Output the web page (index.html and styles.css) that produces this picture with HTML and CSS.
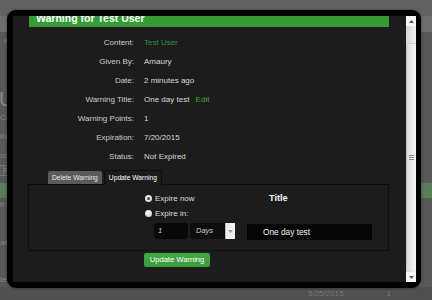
FILE: index.html
```html
<!DOCTYPE html>
<html>
<head>
<meta charset="utf-8">
<link rel="stylesheet" href="styles.css">
</head>
<body>
<div class="page">
  <div class="pg-top"></div>
  <div class="pg-band"></div>
  <div class="pg-line pg-name">Name</div>
  <div class="pg-gap g39"></div>
  <div class="pg-line pg-big">U</div>
  <div class="pg-line">Ce</div>
  <div class="pg-line">Ke</div>
  <div class="pg-line pg-short">sc</div>
  <div class="pg-box">P</div>
  <div class="pg-green"></div>
  <div class="pg-line pg-t14">tr</div>
  <div class="pg-gap g24"></div>
  <div class="pg-line pg-t14">ar</div>
  <div class="pg-gap g23"></div>
  <div class="pg-line pg-t14">te</div>
  <div class="pg-foot"><span class="pg-date">5/25/2015</span><span class="pg-num">1</span></div>
</div>

<div class="modal">
  <div class="viewport">
    <h1 class="head">Warning for Test User</h1>
    <dl class="details">
      <dt>Content:</dt><dd><span class="link-dark">Test User</span></dd>
      <dt>Given By:</dt><dd>Amaury</dd>
      <dt>Date:</dt><dd>2 minutes ago</dd>
      <dt>Warning Title:</dt><dd>One day test <span class="link">Edit</span></dd>
      <dt>Warning Points:</dt><dd>1</dd>
      <dt>Expiration:</dt><dd>7/20/2015</dd>
      <dt>Status:</dt><dd>Not Expired</dd>
    </dl>
    <div class="tabwrap">
      <div class="tabs">
        <span class="tab">Delete Warning</span>
        <span class="tab active">Update Warning</span>
      </div>
      <div class="panel">
        <div class="opt r1"><span class="radio checked"></span>Expire now</div>
        <div class="title-h">Title</div>
        <div class="opt r2"><span class="radio"></span>Expire in:</div>
        <div class="inputs">
          <span class="num">1</span>
          <span class="select"><span class="sel-val">Days</span><span class="sel-btn"><svg width="5" height="3" viewBox="0 0 5 3"><path d="M0 0h5L2.5 3z" fill="#9a9a9a"/></svg></span></span>
        </div>
        <div class="title-in">One day test</div>
      </div>
    </div>
    <div class="actions"><span class="btn">Update Warning</span></div>
  </div>
  <div class="scrollbar">
    <div class="sb-btn"><svg width="5" height="3" viewBox="0 0 5 3"><path d="M0 3h5L2.5 0z" fill="#555"/></svg></div>
    <div class="sb-track">
      <div class="sb-thumb"><span class="grip"></span></div>
    </div>
    <div class="sb-btn"><svg width="5" height="3" viewBox="0 0 5 3"><path d="M0 0h5L2.5 3z" fill="#555"/></svg></div>
  </div>
</div>
</body>
</html>
```

FILE: styles.css
```css
* { box-sizing: border-box; }
html, body { margin: 0; padding: 0; }
body {
  width: 432px;
  height: 300px;
  overflow: hidden;
  position: relative;
  background: #585858;
  font-family: "Liberation Sans", Arial, sans-serif;
}

/* background page (dimmed) */
.page { display: flex; flex-direction: column; }
.pg-top { height: 16px; background: #626262; }
.pg-band { height: 16px; background: #6e6e6e; }
.pg-line {
  height: 19px;
  line-height: 19px;
  font-size: 8px;
  color: #858585;
  white-space: nowrap;
  padding-left: 0;
}
.pg-name { padding-left: 4px; }
.pg-gap.g39 { height: 39px; }
.pg-gap.g24 { height: 24px; }
.pg-gap.g23 { height: 23px; }
.pg-big { font-size: 20px; height: 18px; line-height: 18px; color: #8c8c8c; margin-left: -1px; }
.pg-short { height: 17px; }
.pg-box {
  height: 11px;
  margin: 2px 0 7px -3px;
  width: 40px;
  border: 1px solid #777;
  background: #5f5f5f;
  font-size: 8px;
  line-height: 9px;
  padding-left: 5px;
  color: #8a8a8a;
}
.pg-green { height: 15px; background: #587d58; }
.pg-t14 { height: 14px; line-height: 14px; }
.pg-foot {
  height: 13px;
  display: flex;
  align-items: center;
  font-size: 8px;
  color: #7a7a7a;
  padding-left: 308px;
  background: #505050;
}
.pg-num { margin-left: 43px; }

/* modal */
.modal {
  position: absolute;
  left: 7px;
  top: 10px;
  width: 414px;
  height: 278px;
  background: #000;
  border-radius: 9px;
  padding: 6px 5px 6px 6px;
  display: flex;
  box-shadow: 0 0 3px rgba(0,0,0,0.5);
}
.viewport {
  flex: 1;
  overflow: hidden;
  background: #1c1c1c;
  color: #d4d4d4;
  font-size: 8px;
}
.head {
  margin: -11px 17px 0 16px;
  background: #379a37;
  color: #fff;
  font-size: 10.5px;
  font-weight: bold;
  line-height: 16px;
  padding: 5px 7px 1px;
}
.details {
  display: grid;
  grid-template-columns: 121px 1fr;
  column-gap: 10px;
  margin: 6px 0 0;
  line-height: 19px;
}
.details dt { text-align: right; color: #cdcdcd; }
.details dd { margin: 0; color: #d8d8d8; }
.link-dark { color: #3d8f3d; }
.link { color: #3fa53f; margin-left: 4px; }

.tabwrap { margin: 4px 17px 0 15px; }
.tabs {
  display: flex;
  gap: 2px;
  padding-left: 20px;
  height: 15px;
  border-bottom: 1px solid #0c0c0c;
}
.tab {
  font-size: 6.7px;
  line-height: 13px;
  height: 13px;
  margin-top: 1px;
  padding: 0 4px;
  background: #5b5b5b;
  color: #e8e8e8;
  border-radius: 2px 2px 0 0;
}
.tab.active {
  margin-top: 0;
  height: 15px;
  line-height: 14px;
  background: #1c1c1c;
  color: #fff;
  border: 1px solid #0c0c0c;
  border-bottom-color: #1c1c1c;
}
.panel {
  border: 1px solid #0f0f0f;
  border-top: none;
  display: grid;
  grid-template-columns: 92px 125px;
  grid-template-rows: 13px 16px 16px;
  column-gap: 10px;
  row-gap: 0;
  padding: 7px 0 13px 116px;
}
.opt {
  display: flex;
  align-items: center;
  gap: 3px;
  color: #dcdcdc;
  font-size: 8px;
}
.r1 { grid-column: 1; grid-row: 1; }
.r2 { grid-column: 1; grid-row: 2; }
.radio {
  width: 7px;
  height: 7px;
  border-radius: 50%;
  background: radial-gradient(circle at 40% 35%, #ffffff, #c4c4c4);
  position: relative;
}
.radio.checked::after {
  content: "";
  position: absolute;
  left: 2px;
  top: 2px;
  width: 3px;
  height: 3px;
  border-radius: 50%;
  background: #2f4f7a;
}
.title-h {
  grid-column: 2;
  grid-row: 1;
  font-size: 9.2px;
  font-weight: bold;
  color: #f4f4f4;
  padding-left: 22px;
  line-height: 13px;
}
.inputs {
  grid-column: 1;
  grid-row: 3;
  display: flex;
  gap: 2px;
  padding-left: 9px;
  margin-top: 2px;
}
.num {
  width: 34px;
  height: 16px;
  background: #090909;
  border-radius: 3px;
  font-style: italic;
  font-size: 7.5px;
  line-height: 16px;
  padding-left: 4px;
  color: #d0d0d0;
}
.select {
  display: flex;
  height: 16px;
}
.sel-val {
  width: 35px;
  background: #0e0e0e;
  border-radius: 3px 0 0 3px;
  font-style: italic;
  font-size: 7.5px;
  line-height: 16px;
  padding-left: 6px;
  color: #cfcfcf;
}
.sel-btn {
  width: 10px;
  background: #efefef;
  border-left: 1px solid #bbb;
  display: flex;
  align-items: center;
  justify-content: center;
}
.title-in {
  grid-column: 2;
  grid-row: 3;
  margin-top: 3px;
  height: 16px;
  background: #050505;
  color: #f2f2f2;
  font-size: 8.3px;
  line-height: 16px;
  padding-left: 16px;
}
.actions { padding: 2px 0 0 131px; }
.btn {
  display: inline-block;
  width: 66px;
  height: 14px;
  background: linear-gradient(#44a944, #379b37);
  border-radius: 2px;
  color: #fff;
  font-size: 7.6px;
  line-height: 14px;
  text-align: center;
}

/* scrollbar */
.scrollbar {
  width: 10px;
  display: flex;
  flex-direction: column;
  background: #dadada;
}
.sb-btn {
  height: 10px;
  background: #f6f6f6;
  display: flex;
  align-items: center;
  justify-content: center;
}
.sb-track {
  flex: 1;
  padding: 17px 0 2px;
  background: linear-gradient(90deg, #d4d4d4, #f0f0f0);
  display: flex;
}
.sb-track .sb-thumb { flex: 1; }
.sb-thumb {
  background: linear-gradient(90deg, #dcdcdc, #f3f3f3);
  border-left: 1px solid #c2c2c2;
  border-top: 1px solid #d0d0d0;
  display: flex;
  align-items: center;
  justify-content: center;
}
.grip {
  width: 5px;
  height: 5px;
  background: repeating-linear-gradient(#8a8a8a 0 1px, transparent 1px 2px);
}
```
